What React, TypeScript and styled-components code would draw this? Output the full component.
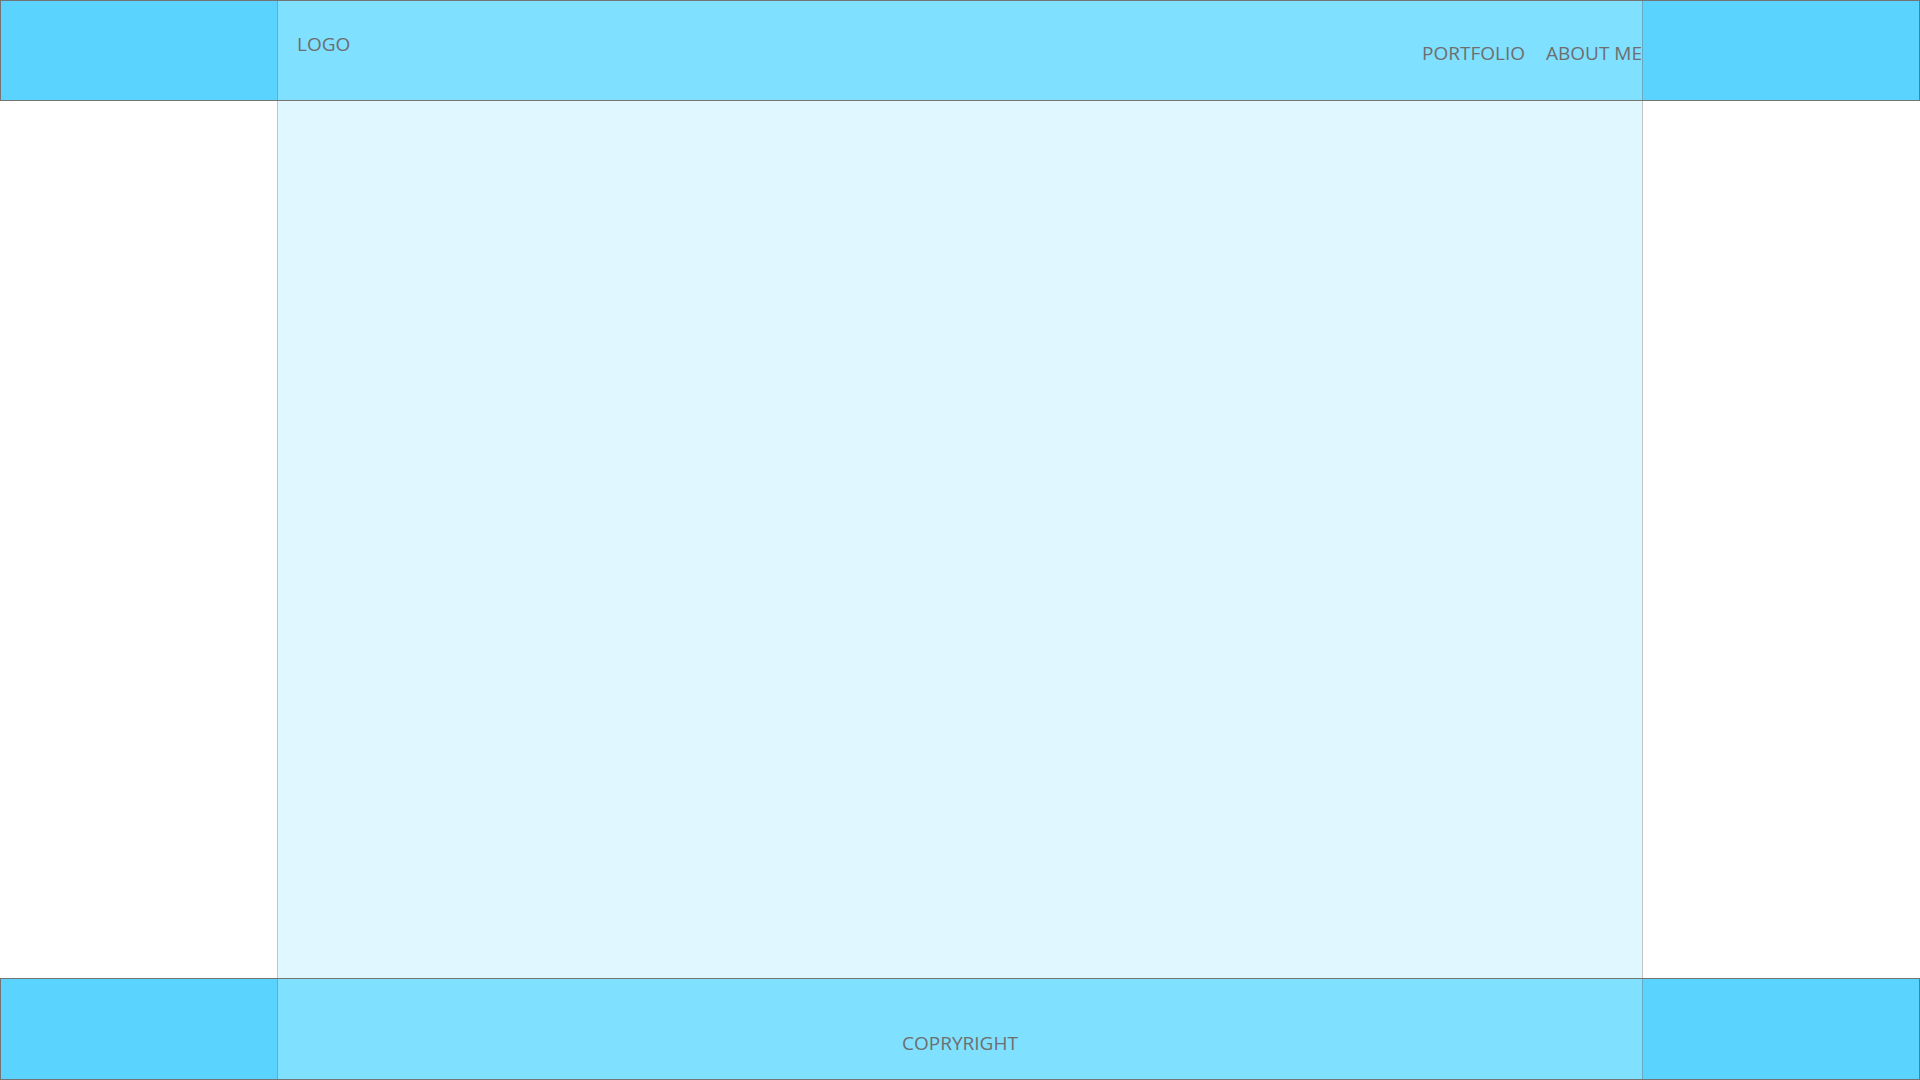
import React from "react";
import styled, { createGlobalStyle } from "styled-components";

const GlobalStyle = createGlobalStyle`
  html, body {
    margin: 0;
    padding: 0;
    background: #ffffff;
  }
  * { box-sizing: border-box; }
`;

const SIDE_BLUE = "#5ad3ff";
const CENTER_BLUE = "#80e0ff";
const BODY_BLUE = "#e0f7ff";
const TEXT = "#6e6e6e";
const CENTER_WIDTH = 1366;

const Page = styled.div`
  height: 100vh;
  display: flex;
  flex-direction: column;
  font-family: "Open Sans", "Noto Sans", sans-serif;
  font-size: 19px;
  color: ${TEXT};
`;

const Band = styled.header<{ $height: number }>`
  height: ${(p) => p.$height}px;
  flex: 0 0 auto;
  background: ${SIDE_BLUE};
  border: 1px solid #747474;
  display: flex;
  justify-content: center;
`;

const BandCenter = styled.div<{ $align?: string }>`
  width: ${CENTER_WIDTH}px;
  flex: 0 0 auto;
  background: ${CENTER_BLUE};
  border-left: 1px solid rgba(70, 90, 100, 0.4);
  border-right: 1px solid rgba(70, 90, 100, 0.4);
  display: flex;
  justify-content: ${(p) => p.$align ?? "space-between"};
  align-items: flex-start;
`;

const Logo = styled.div`
  padding: 30px 0 0 19px;
  line-height: 26px;
`;

const Nav = styled.nav`
  display: flex;
  gap: 21px;
  padding-top: 39px;
  line-height: 26px;
  white-space: nowrap;
`;

const NavItem = styled.a`
  color: ${TEXT};
  text-decoration: none;
`;

const Main = styled.main`
  flex: 1 1 auto;
  display: flex;
  justify-content: center;
`;

const Content = styled.div`
  width: ${CENTER_WIDTH}px;
  flex: 0 0 auto;
  background: ${BODY_BLUE};
  border-left: 1px solid #c2c2c2;
  border-right: 1px solid #c2c2c2;
`;

const Copyright = styled.div`
  padding-top: 51px;
  line-height: 26px;
`;

export default function App() {
  return (
    <>
      <GlobalStyle />
      <Page>
        <Band $height={101}>
          <BandCenter>
            <Logo>LOGO</Logo>
            <Nav>
              <NavItem href="#">PORTFOLIO</NavItem>
              <NavItem href="#">ABOUT ME</NavItem>
            </Nav>
          </BandCenter>
        </Band>
        <Main>
          <Content />
        </Main>
        <Band as="footer" $height={102}>
          <BandCenter $align="center">
            <Copyright>COPRYRIGHT</Copyright>
          </BandCenter>
        </Band>
      </Page>
    </>
  );
}
